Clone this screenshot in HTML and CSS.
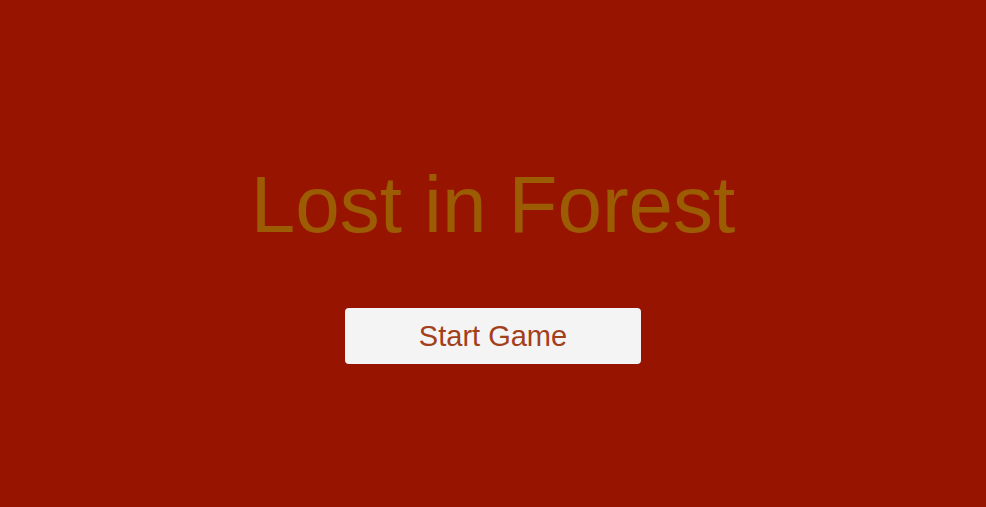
FILE: index.html
```html
<!DOCTYPE html>
<html>
<head>
<meta charset="utf-8">
<link rel="stylesheet" href="styles.css">
</head>
<body>
<main class="screen">
  <h1 class="title">Lost in Forest</h1>
  <button class="start">Start Game</button>
</main>
</body>
</html>
```
FILE: styles.css
```css
html, body {
  margin: 0;
  padding: 0;
  height: 100%;
  background: #971500;
}
.screen {
  display: flex;
  flex-direction: column;
  align-items: center;
  padding-top: 165px;
  font-family: "Liberation Sans", Arial, sans-serif;
}
.title {
  margin: 0;
  font-size: 80px;
  line-height: 80px;
  font-weight: normal;
  color: #9b5c03;
}
.start {
  margin-top: 63px;
  width: 296px;
  height: 56px;
  border: none;
  border-radius: 4px;
  background: #f5f4f4;
  color: #a2401b;
  font-family: "Liberation Sans", Arial, sans-serif;
  font-size: 29px;
  padding: 0;
}
```
